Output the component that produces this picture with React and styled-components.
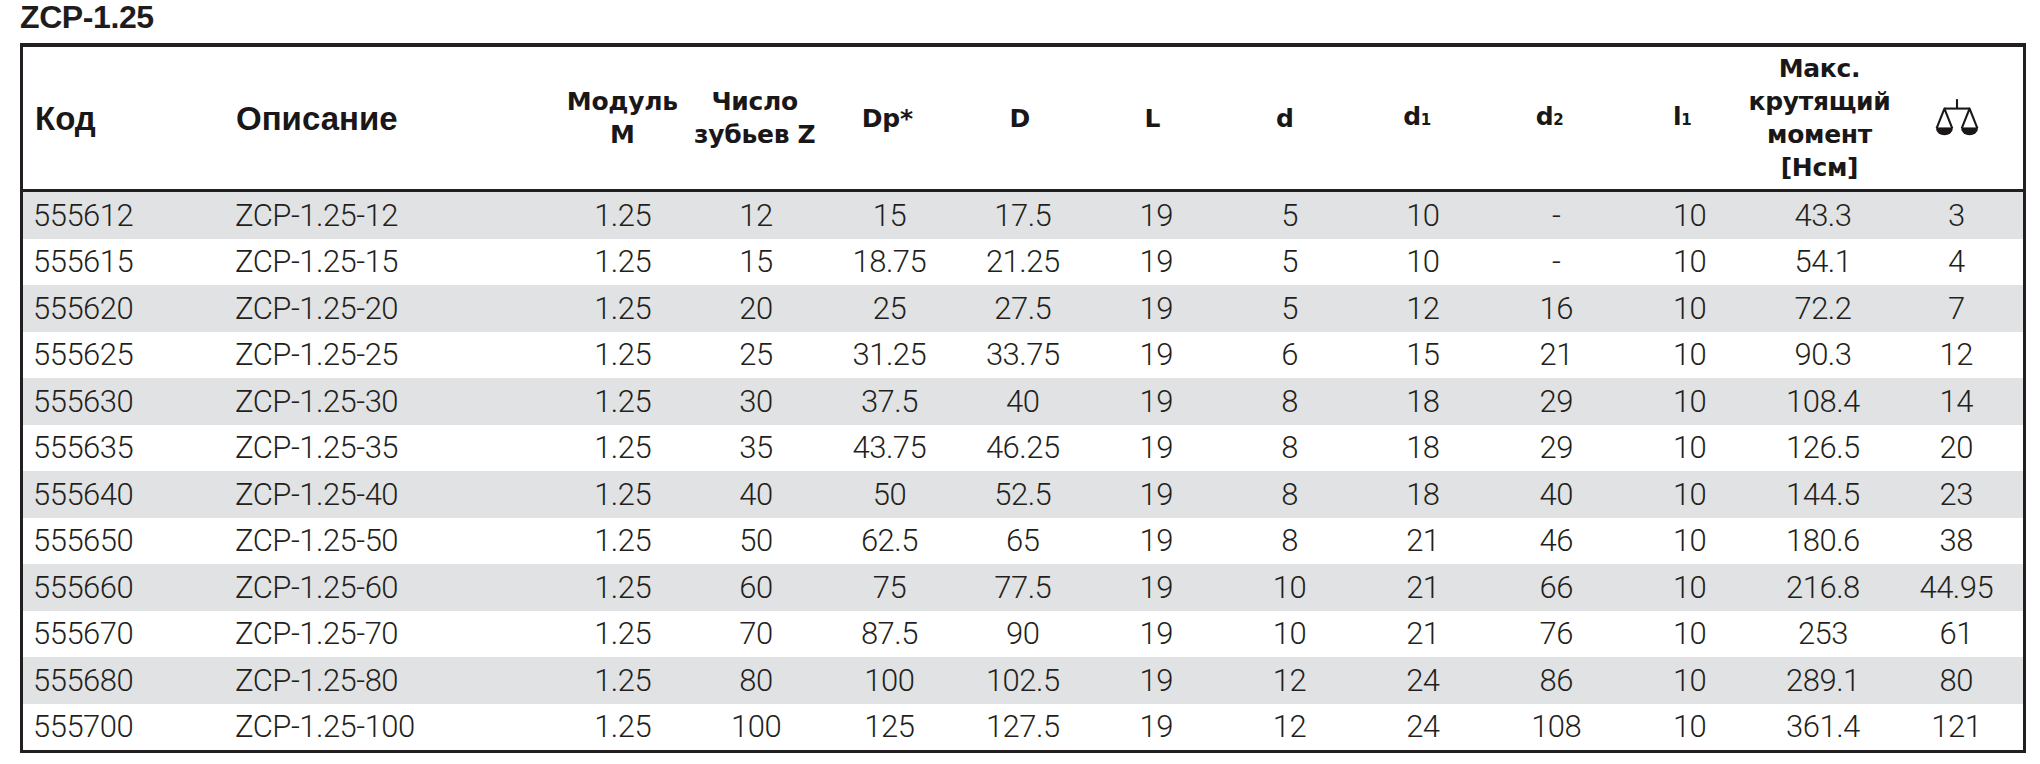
import React from 'react';
import styled, {createGlobalStyle} from 'styled-components';

const GlobalStyle = createGlobalStyle`
  html, body { margin: 0; padding: 0; background: #fff; }
  body { font-family: "Roboto", "Liberation Sans", sans-serif; color: #231f20; }
`;

const COLS = '198px 335px repeat(11, 1fr)';

const Page = styled.div`
  padding: 1px 0 0 20px;
  width: 2006px;
`;

const Title = styled.h1`
  margin: 0 0 10px 0;
  font-family: "Liberation Sans", Arial, sans-serif;
  font-weight: bold;
  font-size: 32px;
  line-height: 32px;
  letter-spacing: -0.4px;
  color: #1f1c1d;
`;

const Table = styled.div`
  width: 2006px;
  box-sizing: border-box;
  border: 3px solid #231f20;
  border-top-width: 4px;
`;

const HeadRow = styled.div`
  display: grid;
  grid-template-columns: ${COLS};
  height: 142px;
  border-bottom: 3px solid #231f20;
`;

const HeadCell = styled.div`
  display: flex;
  align-items: center;
  justify-content: ${p => (p.$left ? 'flex-start' : 'center')};
  padding-left: ${p => p.$pad || 0}px;
  text-align: center;
  font-family: ${p => (p.$big ? '"Liberation Sans", Arial' : '"DejaVu Sans"')}, sans-serif;
  font-weight: bold;
  font-size: ${p => (p.$big ? 33 : 25)}px;
  line-height: 33px;
  color: #1a1718;
  letter-spacing: ${p => (p.$big ? '0' : '-0.3px')};
`;

const Sub = styled.span`
  font-size: 15px;
  letter-spacing: 0;
`;

const Row = styled.div`
  display: grid;
  grid-template-columns: ${COLS};
  height: 46.5px;
  background: ${p => (p.$striped ? '#e1e2e4' : '#fff')};
`;

const Cell = styled.div`
  display: flex;
  align-items: center;
  justify-content: ${p => (p.$left ? 'flex-start' : 'center')};
  padding-left: ${p => p.$pad || 0}px;
  font-family: "Roboto", "Liberation Sans", sans-serif;
  font-weight: 300;
  font-size: 31px;
  letter-spacing: -0.5px;
  color: #231f20;
  white-space: nowrap;
`;

const Scale = () => (
  <svg width="44" height="38" viewBox="0 0 42 36" fill="none">
    <g stroke="#1a1718" strokeWidth="2" strokeLinejoin="round">
      <line x1="21" y1="0" x2="21" y2="9" />
      <line x1="9" y1="9" x2="33" y2="9" />
      <polyline points="1.5,28 9,9 16.5,28" />
      <polyline points="25.5,28 33,9 40.5,28" />
      <line x1="1.5" y1="28" x2="16.5" y2="28" />
      <line x1="25.5" y1="28" x2="40.5" y2="28" />
    </g>
    <path d="M1 28 A8 6.5 0 0 0 17 28 Z" fill="#1a1718" />
    <path d="M25 28 A8 6.5 0 0 0 41 28 Z" fill="#1a1718" />
  </svg>
);

const rows = [
  ['555612', 'ZCP-1.25-12', '1.25', '12', '15', '17.5', '19', '5', '10', '-', '10', '43.3', '3'],
  ['555615', 'ZCP-1.25-15', '1.25', '15', '18.75', '21.25', '19', '5', '10', '-', '10', '54.1', '4'],
  ['555620', 'ZCP-1.25-20', '1.25', '20', '25', '27.5', '19', '5', '12', '16', '10', '72.2', '7'],
  ['555625', 'ZCP-1.25-25', '1.25', '25', '31.25', '33.75', '19', '6', '15', '21', '10', '90.3', '12'],
  ['555630', 'ZCP-1.25-30', '1.25', '30', '37.5', '40', '19', '8', '18', '29', '10', '108.4', '14'],
  ['555635', 'ZCP-1.25-35', '1.25', '35', '43.75', '46.25', '19', '8', '18', '29', '10', '126.5', '20'],
  ['555640', 'ZCP-1.25-40', '1.25', '40', '50', '52.5', '19', '8', '18', '40', '10', '144.5', '23'],
  ['555650', 'ZCP-1.25-50', '1.25', '50', '62.5', '65', '19', '8', '21', '46', '10', '180.6', '38'],
  ['555660', 'ZCP-1.25-60', '1.25', '60', '75', '77.5', '19', '10', '21', '66', '10', '216.8', '44.95'],
  ['555670', 'ZCP-1.25-70', '1.25', '70', '87.5', '90', '19', '10', '21', '76', '10', '253', '61'],
  ['555680', 'ZCP-1.25-80', '1.25', '80', '100', '102.5', '19', '12', '24', '86', '10', '289.1', '80'],
  ['555700', 'ZCP-1.25-100', '1.25', '100', '125', '127.5', '19', '12', '24', '108', '10', '361.4', '121'],
];

const App = () => {
  return (
    <>
      <GlobalStyle />
      <Page>
        <Title>ZCP-1.25</Title>
        <Table>
          <HeadRow>
            <HeadCell $big $left $pad={12}>Код</HeadCell>
            <HeadCell $big $left $pad={15}>Описание</HeadCell>
            <HeadCell><span>Модуль<br />M</span></HeadCell>
            <HeadCell><span>Число<br />зубьев Z</span></HeadCell>
            <HeadCell>Dp*</HeadCell>
            <HeadCell>D</HeadCell>
            <HeadCell>L</HeadCell>
            <HeadCell>d</HeadCell>
            <HeadCell><span>d<Sub>1</Sub></span></HeadCell>
            <HeadCell><span>d<Sub>2</Sub></span></HeadCell>
            <HeadCell><span>l<Sub>1</Sub></span></HeadCell>
            <HeadCell><span>Макс.<br />крутящий<br />момент<br />[Нсм]</span></HeadCell>
            <HeadCell><Scale /></HeadCell>
          </HeadRow>
          {rows.map((r, i) => (
            <Row key={r[0]} $striped={i % 2 === 0}>
              <Cell $left $pad={10}>{r[0]}</Cell>
              <Cell $left $pad={14}>{r[1]}</Cell>
              {r.slice(2).map((v, j) => (
                <Cell key={j}>{v}</Cell>
              ))}
            </Row>
          ))}
        </Table>
      </Page>
    </>
  );
};

export default App;
